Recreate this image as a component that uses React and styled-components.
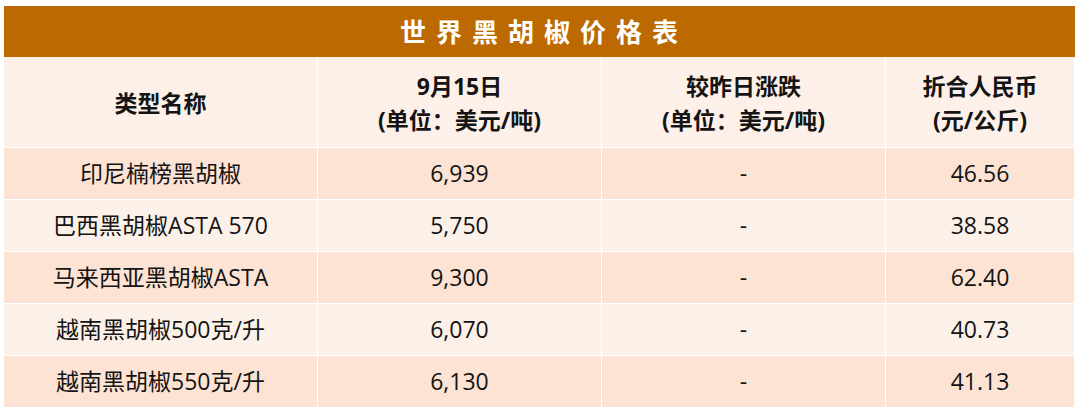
import React from 'react';
import styled, { createGlobalStyle } from 'styled-components';

const rows = [
  { name: '印尼楠榜黑胡椒', price: '6,939', change: '-', rmb: '46.56' },
  { name: '巴西黑胡椒ASTA 570', price: '5,750', change: '-', rmb: '38.58' },
  { name: '马来西亚黑胡椒ASTA', price: '9,300', change: '-', rmb: '62.40' },
  { name: '越南黑胡椒500克/升', price: '6,070', change: '-', rmb: '40.73' },
  { name: '越南黑胡椒550克/升', price: '6,130', change: '-', rmb: '41.13' },
];

const App = () => {
  return (
    <>
      <GlobalStyle />
      <Page>
        <PriceTable>
          <colgroup>
            <col style={{ width: 314 }} />
            <col style={{ width: 284 }} />
            <col style={{ width: 284 }} />
            <col style={{ width: 189 }} />
          </colgroup>
          <thead>
            <tr>
              <TitleCell colSpan={4}>世界黑胡椒价格表</TitleCell>
            </tr>
            <tr>
              <HeadCell>类型名称</HeadCell>
              <HeadCell>
                9月15日
                <br />
                (单位：美元/吨)
              </HeadCell>
              <HeadCell>
                较昨日涨跌
                <br />
                (单位：美元/吨)
              </HeadCell>
              <HeadCell>
                折合人民币
                <br />
                (元/公斤)
              </HeadCell>
            </tr>
          </thead>
          <tbody>
            {rows.map((row, i) => (
              <BodyRow key={row.name} $odd={i % 2 === 0}>
                <Cell>{row.name}</Cell>
                <Cell>{row.price}</Cell>
                <Cell>{row.change}</Cell>
                <Cell>{row.rmb}</Cell>
              </BodyRow>
            ))}
          </tbody>
        </PriceTable>
      </Page>
    </>
  );
};

export default App;

const GlobalStyle = createGlobalStyle`
  body {
    margin: 0;
    background: #ffffff;
    font-family: "Open Sans", "Noto Sans CJK SC", sans-serif;
    color: #141414;
  }
`;

const Page = styled.div`
  padding: 6px 6px 0 3px;
`;

const PriceTable = styled.table`
  width: 1071px;
  border-collapse: collapse;
  table-layout: fixed;
  text-align: center;
`;

const TitleCell = styled.th`
  height: 51px;
  box-sizing: border-box;
  padding: 0 0 2px 10px;
  background: #bb6900;
  color: #ffffff;
  font-family: "Noto Sans CJK SC", sans-serif;
  font-size: 26px;
  font-weight: 700;
  letter-spacing: 10px;
  line-height: 30px;
  border: none;
`;

const HeadCell = styled.th`
  height: 90px;
  box-sizing: border-box;
  padding: 2px 0 0;
  background: #fcf0e8;
  font-size: 23px;
  font-weight: 700;
  line-height: 34px;
  border: 1px solid #ffffff;
  border-top: none;
`;

const BodyRow = styled.tr`
  background: ${({ $odd }) => ($odd ? '#fce3d3' : '#fcf1e9')};
`;

const Cell = styled.td`
  height: 52px;
  box-sizing: border-box;
  padding: 0;
  font-size: 23px;
  line-height: 30px;
  border: 1px solid #ffffff;
`;
